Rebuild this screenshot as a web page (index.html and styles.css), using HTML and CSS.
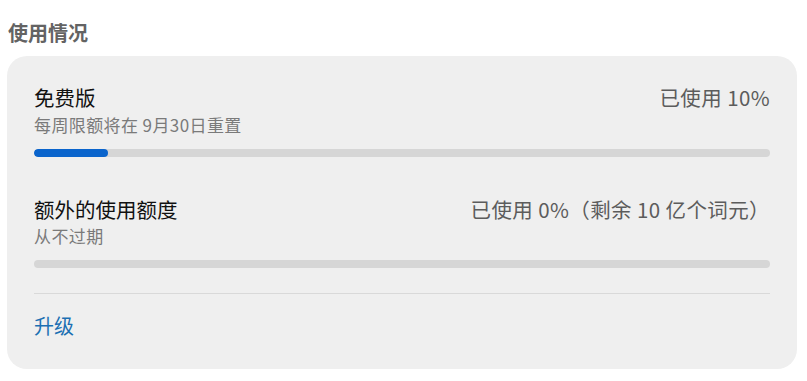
FILE: index.html
```html
<!DOCTYPE html>
<html lang="zh-CN">
<head>
    <meta charset="UTF-8">
    <meta name="viewport" content="width=device-width, initial-scale=1.0">
    <title>使用情况</title>
    <link rel="stylesheet" href="styles.css">
</head>
<body>

<h2 class="page-title">使用情况</h2>

<div class="usage-card">
    <div class="usage-section">
        <div class="usage-head">
            <div>
                <h4>免费版</h4>
                <p class="usage-note">每周限额将在 9月30日重置</p>
            </div>
            <span class="usage-value">已使用 10%</span>
        </div>
        <div class="bar"><div class="bar-fill" style="width: 10%;"></div></div>
    </div>

    <div class="usage-section">
        <div class="usage-head">
            <div>
                <h4>额外的使用额度</h4>
                <p class="usage-note">从不过期</p>
            </div>
            <span class="usage-value">已使用 0%（剩余 10 亿个词元）</span>
        </div>
        <div class="bar"><div class="bar-fill" style="width: 0%;"></div></div>
    </div>

    <a class="upgrade" href="#">升级</a>
</div>

</body>
</html>
```

FILE: styles.css
```css
/* Reset some default styles */
* {
    box-sizing: border-box;
    margin: 0;
    padding: 0;
}

body {
    font-family: "Noto Sans CJK SC", "Noto Sans", sans-serif;
    background-color: #ffffff;
    padding: 19px 10px 0 7px;
    color: #1a1a1a;
}

.page-title {
    font-size: 20px;
    line-height: 28px;
    font-weight: 700;
    color: #636363;
    margin-left: 1px;
    margin-bottom: 9px;
}

.usage-card {
    background-color: #efefef;
    border-radius: 20px;
    padding: 27px 27px 29px;
}

.usage-section + .usage-section {
    margin-top: 38px;
    padding-bottom: 25px;
    border-bottom: 1px solid #d9d9d9;
}

.usage-head {
    display: flex;
    justify-content: space-between;
    align-items: flex-start;
}

.usage-head h4 {
    font-size: 20.5px;
    line-height: 28px;
    font-weight: 400;
    color: #111111;
}

.usage-note {
    font-size: 17px;
    line-height: 22px;
    letter-spacing: 0.4px;
    margin-top: 3px;
    color: #7a7a7a;
}

.usage-section + .usage-section .usage-note {
    margin-top: 2px;
}

.usage-value {
    font-size: 20.5px;
    line-height: 28px;
    letter-spacing: 0.4px;
    color: #5c5c5c;
}

.bar {
    margin-top: 13px;
    height: 8px;
    border-radius: 4px;
    background-color: #d6d6d6;
    overflow: hidden;
}

.bar-fill {
    height: 100%;
    border-radius: 4px;
    background-color: #0a64cc;
}

.upgrade {
    display: inline-block;
    margin-top: 18px;
    font-size: 20px;
    line-height: 28px;
    color: #1b6fb3;
    text-decoration: none;
}
```
